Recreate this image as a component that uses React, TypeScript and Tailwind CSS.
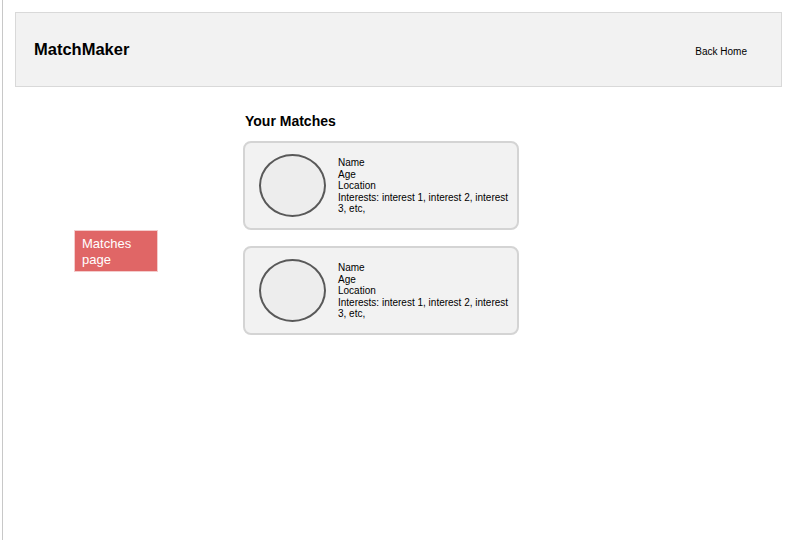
import React from 'react';

const matches = [1, 2];

const MatchCard: React.FC = () => (
  <div className="flex h-[89px] w-[276px] items-center rounded-[8px] border-2 border-[#d4d4d4] bg-[#f2f2f2]">
    <div className="ml-[14px] h-[63px] w-[67px] shrink-0 rounded-[50%] border-2 border-[#595959] bg-[#ededed]" />
    <div className="ml-[12px] w-[172px] pt-[1px] text-[10px] leading-[11.5px] text-black">
      <div>Name</div>
      <div>Age</div>
      <div>Location</div>
      <div>Interests: interest 1, interest 2, interest 3, etc,</div>
    </div>
  </div>
);

export default function App() {
  return (
    <div className="h-[540px] w-[789px] bg-white" style={{ fontFamily: '"Liberation Sans", Arial, sans-serif' }}>
      <div className="ml-[2px] h-full border-l border-[#c8c8c8] pt-[12px]">
        {/* header */}
        <div className="ml-[12px] flex h-[75px] w-[767px] items-center justify-between border border-[#d9d9d9] bg-[#f2f2f2] pl-[18px] pr-[34px]">
          <span className="text-[16.5px] font-bold text-black">MatchMaker</span>
          <span className="pt-[4px] text-[10px] text-black">Back Home</span>
        </div>

        <div className="flex">
          {/* left column */}
          <div className="w-[240px] shrink-0 pl-[71px] pt-[143px]">
            <div className="h-[42px] w-[84px] border border-[#f4cccc] bg-[#e06666] px-[7px] pt-[5px] text-[13px] leading-[16px] text-white">
              Matches page
            </div>
          </div>

          {/* matches */}
          <div className="pt-[26px]">
            <h2 className="ml-[2px] text-[14px] font-bold leading-[16px] text-black">Your Matches</h2>
            <div className="mt-[12px] flex flex-col gap-[16px]">
              {matches.map((m) => (
                <MatchCard key={m} />
              ))}
            </div>
          </div>
        </div>
      </div>
    </div>
  );
}
